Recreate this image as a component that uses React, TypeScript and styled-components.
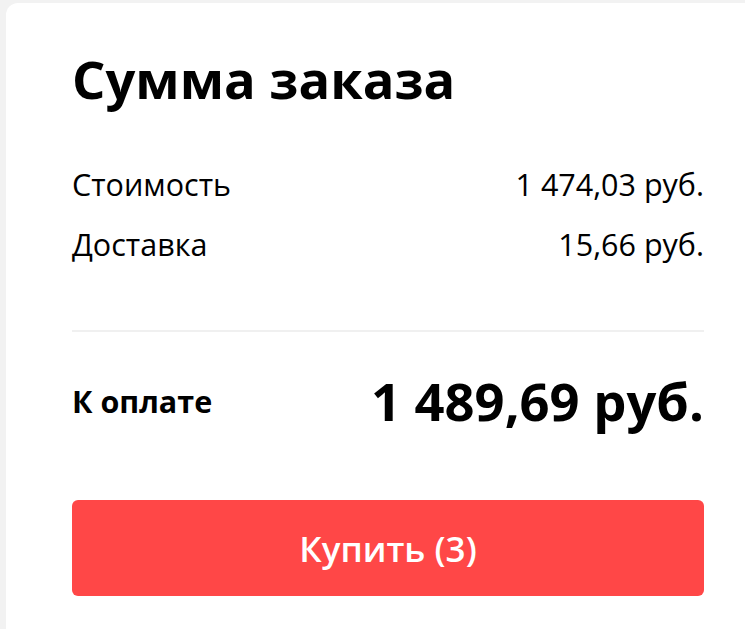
import styled, { createGlobalStyle } from "styled-components";

const GlobalStyle = createGlobalStyle`
  html, body {
    margin: 0;
    padding: 0;
    background: #f2f2f2;
    overflow: hidden;
  }
  body {
    font-family: "Open Sans", "Noto Sans", sans-serif;
    color: #000;
  }
`;

const items = [
  { label: "Стоимость", value: "1 474,03 руб." },
  { label: "Доставка", value: "15,66 руб." },
];

export default function App() {
  return (
    <>
      <GlobalStyle />
      <Page>
        <Card>
          <Title>Сумма заказа</Title>
          <Lines>
            {items.map((item) => (
              <Line key={item.label}>
                <span>{item.label}</span>
                <span>{item.value}</span>
              </Line>
            ))}
          </Lines>
          <Divider />
          <Total>
            <TotalLabel>К оплате</TotalLabel>
            <TotalValue>1 489,69 руб.</TotalValue>
          </Total>
          <BuyButton>Купить (3)</BuyButton>
        </Card>
      </Page>
    </>
  );
}

const Page = styled.div`
  padding: 3px 0 0 6px;
  min-height: 100vh;
  box-sizing: border-box;
`;

const Card = styled.div`
  width: 764px;
  box-sizing: border-box;
  background: #fff;
  border-radius: 12px;
  padding: 46px 66px 40px;
  min-height: 640px;
`;

const Title = styled.h1`
  margin: 0;
  font-size: 52.5px;
  line-height: 60px;
  font-weight: 700;
`;

const Lines = styled.div`
  display: flex;
  flex-direction: column;
  gap: 20px;
  margin-top: 55px;
`;

const Line = styled.div`
  display: flex;
  justify-content: space-between;
  font-size: 30.5px;
  line-height: 40px;
`;

const Divider = styled.hr`
  margin: 66px 0 0;
  border: none;
  height: 2px;
  background: #f0f0f0;
`;

const Total = styled.div`
  display: flex;
  justify-content: space-between;
  align-items: center;
  margin-top: 39px;
`;

const TotalLabel = styled.span`
  font-size: 30.5px;
  line-height: 40px;
  font-weight: 700;
`;

const TotalValue = styled.span`
  font-size: 52.5px;
  line-height: 60px;
  font-weight: 700;
`;

const BuyButton = styled.button`
  display: block;
  width: 100%;
  height: 96px;
  margin-top: 69px;
  border: none;
  border-radius: 6px;
  background: #ff4747;
  color: #fff;
  font-family: "Open Sans", "Noto Sans", sans-serif;
  font-size: 35px;
  font-weight: 600;
  cursor: pointer;
`;
